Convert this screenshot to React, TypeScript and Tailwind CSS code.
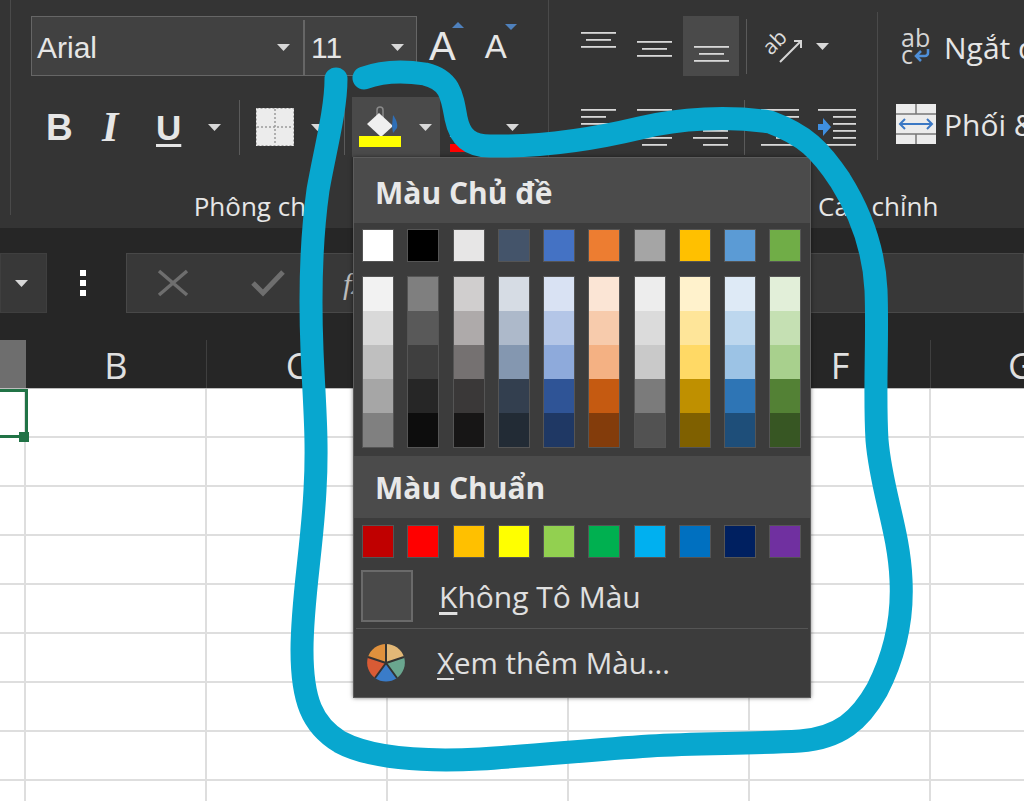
const themeTop = [
  'bg-[#ffffff]', 'bg-[#000000]', 'bg-[#e7e6e6]', 'bg-[#44546a]', 'bg-[#4472c4]',
  'bg-[#ed7d31]', 'bg-[#a5a5a5]', 'bg-[#ffc000]', 'bg-[#5b9bd5]', 'bg-[#70ad47]',
];

const themeTints = [
  ['bg-[#f2f2f2]', 'bg-[#d9d9d9]', 'bg-[#bfbfbf]', 'bg-[#a6a6a6]', 'bg-[#808080]'],
  ['bg-[#7f7f7f]', 'bg-[#595959]', 'bg-[#3f3f3f]', 'bg-[#262626]', 'bg-[#0d0d0d]'],
  ['bg-[#d0cece]', 'bg-[#aeaaaa]', 'bg-[#757171]', 'bg-[#3a3838]', 'bg-[#171616]'],
  ['bg-[#d6dce4]', 'bg-[#adb9ca]', 'bg-[#8497b0]', 'bg-[#333f4f]', 'bg-[#222b35]'],
  ['bg-[#d9e2f3]', 'bg-[#b4c6e7]', 'bg-[#8eaadb]', 'bg-[#2f5496]', 'bg-[#1f3864]'],
  ['bg-[#fbe5d5]', 'bg-[#f7cbac]', 'bg-[#f4b183]', 'bg-[#c55a11]', 'bg-[#833c0b]'],
  ['bg-[#ededed]', 'bg-[#dbdbdb]', 'bg-[#c9c9c9]', 'bg-[#7b7b7b]', 'bg-[#525252]'],
  ['bg-[#fff2cc]', 'bg-[#fee599]', 'bg-[#ffd965]', 'bg-[#bf9000]', 'bg-[#7f6000]'],
  ['bg-[#deeaf6]', 'bg-[#bdd7ee]', 'bg-[#9cc3e5]', 'bg-[#2e75b5]', 'bg-[#1e4e79]'],
  ['bg-[#e2efd9]', 'bg-[#c5e0b3]', 'bg-[#a8d08d]', 'bg-[#538135]', 'bg-[#375623]'],
];

const standard = [
  'bg-[#c00000]', 'bg-[#ff0000]', 'bg-[#ffc000]', 'bg-[#ffff00]', 'bg-[#92d050]',
  'bg-[#00b050]', 'bg-[#00b0f0]', 'bg-[#0070c0]', 'bg-[#002060]', 'bg-[#7030a0]',
];

const columns = ['', 'B', 'C', '', '', 'F', 'G'];
const rows = [0, 1, 2, 3, 4, 5, 6, 7, 8];

function Caret({ className = '' }: { className?: string }) {
  return (
    <svg width="13" height="7" viewBox="0 0 13 7" className={className}>
      <path d="M0 0h13L6.5 7z" fill="#d8d8d8" />
    </svg>
  );
}

function Lines({ lines }: { lines: [number, number, number][] }) {
  return (
    <svg width="40" height="40" viewBox="0 0 40 40" className="shrink-0">
      {lines.map(([x1, x2, y], i) => (
        <rect key={i} x={x1} y={y} width={x2 - x1} height="1.8" fill="#d8d8d8" />
      ))}
    </svg>
  );
}

const alignTop: [number, number, number][] = [[3, 38, 6], [8, 33, 13], [3, 38, 20]];
const alignMiddle: [number, number, number][] = [[3, 38, 15], [8, 33, 22], [3, 38, 29]];
const alignBottom: [number, number, number][] = [[3, 38, 20], [8, 33, 27], [3, 38, 34]];
const textLeft: [number, number, number][] = [[3, 38, 2], [3, 28, 9], [3, 38, 16], [3, 28, 23], [3, 38, 30], [3, 28, 37]];
const textCenter: [number, number, number][] = [[3, 38, 2], [8, 33, 9], [3, 38, 16], [8, 33, 23], [3, 38, 30], [8, 33, 37]];
const textRight: [number, number, number][] = [[3, 38, 2], [13, 38, 9], [3, 38, 16], [13, 38, 23], [3, 38, 30], [13, 38, 37]];

function BucketIcon() {
  return (
    <svg width="44" height="44" viewBox="0 0 44 44">
      <path d="M20 12V5a3 3 0 0 1 6 0v9" fill="none" stroke="#8a8a8a" strokeWidth="1.5" />
      <path d="M22 8l14 13-12 11-14-13z" fill="#f0f0f0" />
      <path d="M36 10c3 4 5 9 4 13l-4 5-1-7z" fill="#2f6fb7" />
      <rect x="2" y="31" width="42" height="11" fill="#ffff00" />
    </svg>
  );
}

function BordersIcon() {
  return (
    <svg width="38" height="38" viewBox="0 0 38 38">
      <rect width="38" height="38" fill="#ececec" />
      <path d="M19 1v36M1 19h36" stroke="#9a9a9a" strokeWidth="1.5" strokeDasharray="2 2" />
      <rect x=".5" y=".5" width="37" height="37" fill="none" stroke="#aaa" strokeDasharray="2 2" />
    </svg>
  );
}

function OrientationIcon() {
  return (
    <svg width="38" height="36" viewBox="0 0 38 36" fill="none" stroke="#d5d5d5" strokeWidth="2" className="overflow-visible">
      <path d="M15 34 35 14M29 13h7v7" />
      <text
        x="6"
        y="28"
        transform="rotate(-45 6 28)"
        fontFamily="Open Sans, sans-serif"
        fontSize="21"
        fill="#dcdcdc"
        stroke="none"
      >
        ab
      </text>
    </svg>
  );
}

function IndentIcon({ arrow }: { arrow?: boolean }) {
  return (
    <svg width="40" height="40" viewBox="0 0 40 40">
      <rect x="1" y="2" width="38" height="1.8" fill="#d8d8d8" />
      <rect x="16" y="9" width="23" height="1.8" fill="#d8d8d8" />
      <rect x="16" y="16" width="23" height="1.8" fill="#d8d8d8" />
      <rect x="16" y="23" width="23" height="1.8" fill="#d8d8d8" />
      <rect x="16" y="30" width="23" height="1.8" fill="#d8d8d8" />
      <rect x="1" y="37" width="38" height="1.8" fill="#d8d8d8" />
      {arrow && <path d="M1 17h5V11l8 9-8 9v-6H1z" fill="#3f8fe0" />}
    </svg>
  );
}

function MergeIcon() {
  return (
    <svg width="40" height="40" viewBox="0 0 40 40">
      <rect width="40" height="40" fill="#ececec" />
      <path d="M0 10h40M0 30h40M20 0v10M20 30v10" stroke="#777" strokeWidth="1.5" />
      <path d="M4 20h32M9 15l-5 5 5 5M31 15l5 5-5 5" fill="none" stroke="#3b78c4" strokeWidth="2" />
    </svg>
  );
}

function WrapArrow() {
  return (
    <svg width="16" height="14" viewBox="0 0 16 14" fill="none" stroke="#4f8fd8" strokeWidth="2.5">
      <path d="M14 1v4a3 3 0 0 1-3 3H3M7 3 2 8l5 5" />
    </svg>
  );
}

function PieIcon() {
  return (
    <svg width="40" height="40" viewBox="-20 -20 40 40">
      <path d="M0 0V-19A19 19 0 0 1 18 -6z" fill="#e3b877" />
      <path d="M0 0 18 -6A19 19 0 0 1 11 15z" fill="#6aa68f" />
      <path d="M0 0 11 15A19 19 0 0 1 -11 15z" fill="#3a7cc9" />
      <path d="M0 0-11 15A19 19 0 0 1 -18 -6z" fill="#d95b35" />
      <path d="M0 0-18 -6A19 19 0 0 1 0 -19z" fill="#e0913d" />
      <path d="M0 0V-19M0 0 18 -6M0 0 11 15M0 0-11 15M0 0-18 -6" stroke="#333" strokeWidth="2" />
    </svg>
  );
}

function ColorPopup() {
  return (
    <div className="absolute left-[353px] top-[157px] h-[541px] w-[458px] border border-[#5c5c5c] bg-[#3c3c3c] shadow-[0_0_4px_rgba(0,0,0,0.5)]">
      <div className="flex h-[65px] items-center bg-[#4b4b4b] pl-[21px] pt-[3px] text-[30px] font-bold text-[#e8e8e8]">
        Màu Chủ đề
      </div>
      <div className="mt-[6px] flex gap-[13.25px] pl-[8px]">
        {themeTop.map((color) => (
          <div key={color} className={`h-[33px] w-[32px] border border-[#555] ${color}`} />
        ))}
      </div>
      <div className="mt-[14px] flex gap-[13.25px] pl-[8px]">
        {themeTints.map((col, i) => (
          <div key={i} className="w-[32px] border border-[#555]">
            {col.map((color) => (
              <div key={color} className={`h-[34px] ${color}`} />
            ))}
          </div>
        ))}
      </div>
      <div className="mt-[8px] flex h-[62px] items-center bg-[#4b4b4b] pl-[21px] text-[30px] font-bold text-[#e8e8e8]">
        Màu Chuẩn
      </div>
      <div className="mt-[7px] flex gap-[13.25px] pl-[8px]">
        {standard.map((color) => (
          <div key={color} className={`h-[33px] w-[32px] border border-[#555] ${color}`} />
        ))}
      </div>
      <div className="mt-[12px] flex items-center pl-[7px]">
        <div className="h-[52px] w-[52px] border-2 border-[#6a6a6a] bg-[#4a4a4a]" />
        <span className="ml-[26px] text-[30px] text-[#e0e0e0]">
          <span className="underline underline-offset-4">K</span>hông Tô Màu
        </span>
      </div>
      <div className="mx-[2px] mt-[6px] h-px bg-[#555]" />
      <div className="mt-[11px] flex items-center pl-[12px]">
        <PieIcon />
        <span className="ml-[31px] pt-[1px] text-[29.5px] text-[#e0e0e0]">
          <span className="underline underline-offset-4">X</span>em thêm Màu...
        </span>
      </div>
    </div>
  );
}

function Annotation() {
  return (
    <svg width="1024" height="801" viewBox="0 0 1024 801" className="pointer-events-none absolute inset-0">
      <path
        d="M336 79C336 110 325 150 318 190C311 240 310 300 312 350C314 400 318 440 315 490C312 550 302 600 302 650C302 700 312 725 340 742C370 758 420 762 480 759C540 755 590 750 650 746C700 743 750 744 800 741C840 738 860 720 877 690C895 655 903 620 901 580C899 530 881 490 877 440C874 390 878 340 876 290C874 250 862 215 840 180C820 150 805 135 770 122C730 116 680 118 640 128C590 140 540 147 490 146C470 146 460 138 456 118C452 95 450 80 425 74C400 70 380 72 364 78"
        fill="none"
        stroke="#08a7cf"
        strokeWidth="23"
        strokeLinecap="round"
        strokeLinejoin="round"
      />
    </svg>
  );
}

export default function App() {
  return (
    <div className="relative h-[801px] w-[1024px] overflow-hidden bg-white font-['Open_Sans',sans-serif]">
      {/* ribbon */}
      <div className="flex h-[228px] overflow-hidden bg-[#343434] text-[#e6e6e6]">
        <div className="ml-[10px] mb-[13px] w-[539px] shrink-0 border-x border-[#4a4a4a] pl-[20px]">
          <div className="mt-[16px] flex items-center">
            <div className="flex h-[60px] w-[386px] items-center border border-[#666] bg-[#414141] pt-[3px] font-['Liberation_Sans',sans-serif] text-[30px]">
              <div className="flex h-full w-[273px] items-center justify-between border-r-2 border-[#666] pl-[5px] pr-[13px]">
                Arial
                <Caret />
              </div>
              <div className="flex flex-1 items-center justify-between pl-[6px] pr-[12px]">
                11
                <Caret />
              </div>
            </div>
            <div className="relative ml-[12px] font-['Liberation_Sans',sans-serif] text-[40px] leading-none">
              A
              <span className="absolute -right-[8px] top-[-4px] h-0 w-0 border-x-[6px] border-b-[6px] border-x-transparent border-b-[#4f81bd]" />
            </div>
            <div className="relative ml-[29px] font-['Liberation_Sans',sans-serif] text-[33px] leading-none">
              A
              <span className="absolute -right-[10px] top-[-6px] h-0 w-0 border-x-[6px] border-t-[6px] border-x-transparent border-t-[#4f81bd]" />
            </div>
          </div>
          <div className="mt-[21px] flex h-[60px] items-center font-['Liberation_Sans',sans-serif] text-[37px] leading-none">
            <span className="ml-[15px] w-[56px] font-bold">B</span>
            <span className="w-[54px] font-['Liberation_Serif',serif] text-[42px] font-bold italic">I</span>
            <span className="w-[52px] text-[35px] font-bold underline underline-offset-4">U</span>
            <Caret />
            <div className="ml-[18px] h-[55px] w-px bg-[#5a5a5a]" />
            <div className="ml-[16px]">
              <BordersIcon />
            </div>
            <Caret className="ml-[17px]" />
            <div className="ml-[20px] h-[55px] w-px bg-[#5a5a5a]" />
            <div className="ml-[7px] flex h-[60px] w-[88px] items-center bg-[#4a4a4a] pl-[5px]">
              <BucketIcon />
              <Caret className="ml-[18px]" />
            </div>
            <div className="relative ml-[10px] w-[56px] text-[30px]">
              A
              <span className="absolute left-0 top-[32px] h-[8px] w-[24px] bg-[#ff0000]" />
            </div>
            <Caret />
          </div>
          <div className="mt-[36px] pr-[62px] text-center text-[26px] leading-none">Phông chữ</div>
        </div>

        <div className="w-[328px] shrink-0 pl-[29px]">
          <div className="mt-[16px] flex h-[60px] items-center">
            <Lines lines={alignTop} />
            <div className="w-[16px]" />
            <Lines lines={alignMiddle} />
            <div className="ml-[9px] flex h-[60px] w-[56px] items-center justify-center bg-[#4a4a4a]">
              <Lines lines={alignBottom} />
            </div>
            <div className="ml-[7px] h-[55px] w-px bg-[#5a5a5a]" />
            <div className="ml-[18px]">
              <OrientationIcon />
            </div>
            <Caret className="ml-[13px]" />
          </div>
          <div className="mt-[21px] flex h-[60px] items-center">
            <Lines lines={textLeft} />
            <div className="w-[16px]" />
            <Lines lines={textCenter} />
            <div className="w-[16px]" />
            <Lines lines={textRight} />
            <div className="ml-[14px] h-[55px] w-px bg-[#5a5a5a]" />
            <div className="ml-[15px]">
              <IndentIcon />
            </div>
            <div className="ml-[17px]">
              <IndentIcon arrow />
            </div>
          </div>
          <div className="ml-[240px] mt-[36px] w-[130px] whitespace-nowrap text-[26px] leading-none">
            Căn chỉnh
          </div>
        </div>

        <div className="mt-[12px] flex h-[148px] flex-1 flex-col whitespace-nowrap border-l border-[#4a4a4a] pl-[18px] text-[30px]">
          <div className="flex h-[68px] items-center pt-[2px]">
            <div className="h-[36px] w-[40px] pl-[5px] text-[25px] leading-[17px] text-[#d5d5d5]">
              <div>ab</div>
              <div className="flex items-center gap-[1px]">
                c
                <WrapArrow />
              </div>
            </div>
            <span className="ml-[8px]">Ngắt dòng</span>
          </div>
          <div className="mt-[13px] flex h-[60px] items-center pt-[2px]">
            <MergeIcon />
            <span className="ml-[8px]">Phối &amp; Căn giữa</span>
          </div>
        </div>
      </div>

      {/* formula bar */}
      <div className="flex h-[112px] items-center bg-[#262626] pb-[2px]">
        <div className="flex h-[60px] w-[47px] items-center justify-end border border-[#3f3f3f] bg-[#383838] pr-[18px]">
          <Caret />
        </div>
        <div className="ml-[33px] flex w-[8px] flex-col gap-[4px]">
          <div className="h-[6px] w-[6px] bg-white" />
          <div className="h-[6px] w-[6px] bg-white" />
          <div className="h-[6px] w-[6px] bg-white" />
        </div>
        <div className="ml-[38px] flex h-[60px] flex-1 items-center border border-[#484848] bg-[#383838] pl-[30px]">
          <svg width="32" height="28" viewBox="0 0 32 28" fill="none" stroke="#6e6e6e" strokeWidth="3.5">
            <path d="M2 2 30 26M30 2 2 26" />
          </svg>
          <svg width="34" height="28" viewBox="0 0 34 28" fill="none" stroke="#6e6e6e" strokeWidth="5" className="ml-[62px]">
            <path d="M2 14 12 24 32 3" />
          </svg>
          <span className="ml-[58px] font-['Liberation_Serif',serif] text-[30px] italic text-[#bbbbbb]">fx</span>
        </div>
      </div>

      {/* column headers */}
      <div className="grid h-[48px] grid-cols-[26px_181px_181px_181px_181px_181px_181px] bg-[#262626] text-[36px] leading-none text-[#e0e0e0]">
        {columns.map((label, i) => (
          <div
            key={i}
            className={
              i === 0
                ? 'bg-[#6e6e6e]'
                : 'flex items-center justify-center border-r border-[#3f3f3f] pt-[3px]'
            }
          >
            {label}
          </div>
        ))}
      </div>

      {/* cells */}
      <div className="relative border-t border-[#bdbdbd]">
        {rows.map((row) => (
          <div key={row} className="grid h-[49px] grid-cols-[26px_181px_181px_181px_181px_181px_181px] border-b-2 border-[#dedede]">
            {columns.map((_, i) => (
              <div key={i} className="border-r-2 border-[#dedede]" />
            ))}
          </div>
        ))}
        <div className="absolute left-[-3px] top-0 h-[49px] w-[31px] border-[3px] border-[#217346]" />
        <div className="absolute left-[19px] top-[43px] h-[10px] w-[10px] bg-[#217346]" />
      </div>

      <ColorPopup />
      <Annotation />
    </div>
  );
}
